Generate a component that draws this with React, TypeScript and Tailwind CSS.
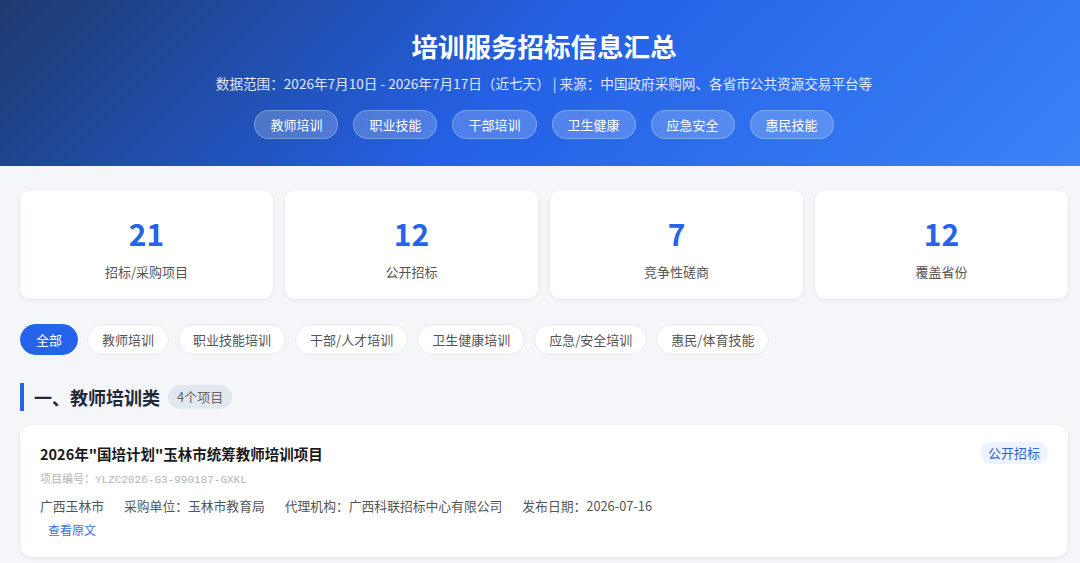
import React from "react";

const headerTags = ["教师培训", "职业技能", "干部培训", "卫生健康", "应急安全", "惠民技能"];

const stats = [
  { value: "21", label: "招标/采购项目" },
  { value: "12", label: "公开招标" },
  { value: "7", label: "竞争性磋商" },
  { value: "12", label: "覆盖省份" },
];

const filters = ["全部", "教师培训", "职业技能培训", "干部/人才培训", "卫生健康培训", "应急/安全培训", "惠民/体育技能"];

const App: React.FC = () => {
  return (
    <div
      className="min-h-screen bg-[#f4f6fa] text-[#333]"
      style={{ fontFamily: '"Noto Sans CJK SC", "Noto Sans", sans-serif' }}
    >
      {/* Header */}
      <header className="h-[166px] bg-[linear-gradient(135deg,#1e3a6e_0%,#2461e6_48%,#3b82f6_100%)] pl-2 pt-[30px] text-center text-white">
        <h1 className="text-[26.5px] font-bold leading-[31px]">培训服务招标信息汇总</h1>
        <p className="mt-3 text-[13.6px] leading-5 text-white/85">
          数据范围：2026年7月10日 - 2026年7月17日（近七天） | 来源：中国政府采购网、各省市公共资源交易平台等
        </p>
        <div className="mt-[17px] flex justify-center gap-[15px]">
          {headerTags.map((t) => (
            <span
              key={t}
              className="flex h-[29px] items-center rounded-full border border-white/25 bg-white/20 px-[15px] text-[13px] text-white"
            >
              {t}
            </span>
          ))}
        </div>
      </header>

      <main className="pl-5 pr-3">
        {/* Stats */}
        <div className="mt-6 grid grid-cols-4 gap-3">
          {stats.map((s) => (
            <div
              key={s.label}
              className="flex h-[109px] flex-col items-center rounded-[10px] bg-white pt-[25px] shadow-[0_1px_4px_rgba(0,0,0,0.08)]"
            >
              <div className="text-[30px] font-bold leading-[36px] text-[#2563eb]">{s.value}</div>
              <div className="mt-[11px] text-[13px] leading-5 text-[#555]">{s.label}</div>
            </div>
          ))}
        </div>

        {/* Filters */}
        <div className="mt-[25px] flex gap-[9px]">
          {filters.map((f, i) => (
            <button
              key={f}
              className={
                i === 0
                  ? "flex h-[31px] items-center rounded-full border border-[#2563eb] bg-[#2563eb] px-[15px] text-[13px] text-white"
                  : "flex h-[31px] items-center rounded-full border border-[#e6e9ef] bg-white px-[14px] text-[13px] text-[#555]"
              }
            >
              {f}
            </button>
          ))}
        </div>

        {/* Section heading */}
        <div className="mt-7 flex h-[28px] items-center border-l-4 border-[#2563eb] pl-[10px]">
          <h2 className="text-[18px] font-bold leading-7 text-[#1f2937]">一、教师培训类</h2>
          <span className="ml-2 flex h-6 items-center rounded-full bg-[#e2e8f0] px-[9px] text-[13px] text-[#666]">
            4个项目
          </span>
        </div>

        {/* Item card */}
        <div className="mt-[14px] rounded-[12px] bg-white px-5 pb-[18px] pt-[17px] shadow-[0_1px_4px_rgba(0,0,0,0.08)]">
          <div className="flex items-start justify-between">
            <h3 className="text-[14.5px] font-bold leading-6 text-[#1a1a1a]">
              2026年"国培计划"玉林市统筹教师培训项目
            </h3>
            <span className="flex h-[22px] items-center rounded-full bg-[#eef4ff] px-2 text-[13px] text-[#3560d6]">
              公开招标
            </span>
          </div>
          <div
            className="mt-[6px] text-[11px] leading-4 text-[#b2b6bd]"
            style={{ fontFamily: '"Liberation Mono", "Noto Sans CJK SC", monospace' }}
          >
            项目编号：YLZC2026-G3-990187-GXKL
          </div>
          <div className="mt-2 flex gap-5 text-[12.8px] leading-5 text-[#555]">
            <span>广西玉林市</span>
            <span>采购单位：玉林市教育局</span>
            <span>代理机构：广西科联招标中心有限公司</span>
            <span>发布日期：2026-07-16</span>
          </div>
          <div className="mt-[5px] px-2 text-[12px] leading-[18px] text-[#3b6fe0]">查看原文</div>
        </div>
      </main>
    </div>
  );
};

export default App;
